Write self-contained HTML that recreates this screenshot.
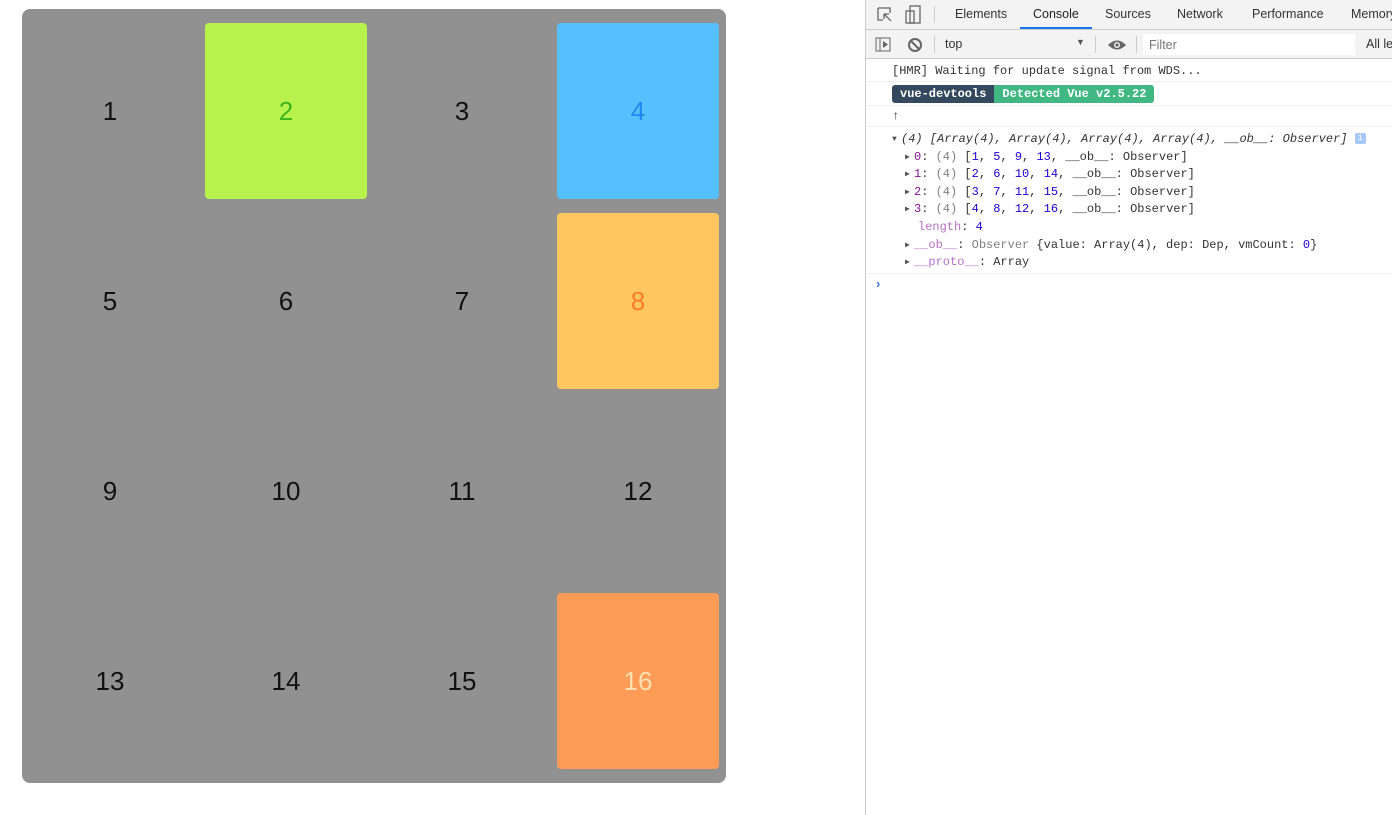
<!DOCTYPE html>
<html><head><meta charset="utf-8"><style>
*{margin:0;padding:0;box-sizing:border-box}
body{width:1392px;height:815px;background:#fff;position:relative;overflow:hidden;font-family:"Liberation Sans",sans-serif}
.grid{position:absolute;left:22px;top:9px;width:704px;height:774px;background:#919191;border-radius:8px}
.c{position:absolute;width:162px;height:176px;border-radius:4px;display:flex;align-items:center;justify-content:center;font-size:26px;color:#111}
.dt{position:absolute;left:865px;top:0;width:527px;height:815px;border-left:1px solid #ccc;background:#fff;font-size:12.5px;color:#333;overflow:hidden}
.tb{height:30px;background:#f3f3f3;border-bottom:1px solid #ccc;position:relative}
.tb span{position:absolute;top:7px;font-size:12.5px;color:#333;white-space:nowrap}
.tb2{height:29px;background:#f3f3f3;border-bottom:1px solid #ccc;position:relative}
.mono{font-family:"Liberation Mono","DejaVu Sans Mono",monospace;font-size:12px}
.line{position:absolute;left:0;width:527px}
.p{color:#881391}.n{color:#1c00cf}.g{color:#808080}
.r{height:17.6px;line-height:17.6px;white-space:pre;position:relative}
.t{display:inline-block;width:9px;font-size:8px;color:#555;vertical-align:top}
</style></head><body>
<div class="grid">
<div class="c" style="left:7px;top:14px">1</div>
<div class="c" style="left:183px;top:14px;background:#b8f24c;color:#3fb31a">2</div>
<div class="c" style="left:359px;top:14px">3</div>
<div class="c" style="left:535px;top:14px;background:#55bfff;color:#1e88f0">4</div>
<div class="c" style="left:7px;top:204px">5</div>
<div class="c" style="left:183px;top:204px">6</div>
<div class="c" style="left:359px;top:204px">7</div>
<div class="c" style="left:535px;top:204px;background:#fec65e;color:#fb7d28">8</div>
<div class="c" style="left:7px;top:394px">9</div>
<div class="c" style="left:183px;top:394px">10</div>
<div class="c" style="left:359px;top:394px">11</div>
<div class="c" style="left:535px;top:394px">12</div>
<div class="c" style="left:7px;top:584px">13</div>
<div class="c" style="left:183px;top:584px">14</div>
<div class="c" style="left:359px;top:584px">15</div>
<div class="c" style="left:535px;top:584px;background:#fe9b56;color:#ffe0b0">16</div>
</div>
<div class="dt">
<div class="tb">
<svg style="position:absolute;left:10px;top:6px" width="18" height="18"><path d="M2 2h12v5M2 2v12h5M8 8l7 7M8 8h5M8 8v5" stroke="#666" fill="none" stroke-width="1.3"/></svg>
<svg style="position:absolute;left:38px;top:5px" width="18" height="20"><rect x="2" y="6" width="8" height="12" stroke="#666" fill="none" stroke-width="1.3"/><rect x="6" y="1" width="10" height="17" stroke="#666" fill="none" stroke-width="1.3"/></svg>
<div style="position:absolute;left:68px;top:6px;width:1px;height:17px;background:#ccc"></div>
<span style="left:89px">Elements</span>
<span style="left:167px;color:#222">Console</span>
<div style="position:absolute;left:154px;top:27px;width:72px;height:2px;background:#1a73e8"></div>
<span style="left:239px">Sources</span>
<span style="left:311px">Network</span>
<span style="left:386px">Performance</span>
<span style="left:485px">Memory</span>
</div>
<div class="tb2">
<svg style="position:absolute;left:9px;top:7px" width="16" height="16"><rect x="1" y="1" width="14" height="13" stroke="#666" fill="none"/><path d="M5 1v13" stroke="#666"/><path d="M8 4l5 3.5-5 3.5z" fill="#666"/></svg>
<svg style="position:absolute;left:41px;top:7px" width="16" height="16"><circle cx="8" cy="8" r="6" stroke="#666" fill="none" stroke-width="2"/><path d="M4 4l8 8" stroke="#666" stroke-width="2"/></svg>
<div style="position:absolute;left:68px;top:6px;width:1px;height:17px;background:#ccc"></div>
<span style="position:absolute;left:79px;top:7px">top</span>
<span style="position:absolute;left:210px;top:7px;font-size:9px;color:#555">▼</span>
<div style="position:absolute;left:229px;top:6px;width:1px;height:17px;background:#ccc"></div>
<svg style="position:absolute;left:241px;top:8px" width="20" height="14"><path d="M1 7Q10 -2 19 7Q10 16 1 7z" fill="#666"/><circle cx="10" cy="7" r="3" fill="#f3f3f3"/><circle cx="10" cy="7" r="1.6" fill="#666"/></svg>
<div style="position:absolute;left:270px;top:6px;width:1px;height:17px;background:#ccc"></div>
<div style="position:absolute;left:277px;top:4px;width:212px;height:21px;background:#fff"></div>
<span style="position:absolute;left:283px;top:8px;color:#777">Filter</span>
<span style="position:absolute;left:500px;top:7px;white-space:nowrap">All levels</span>
</div>
<div class="line mono" style="top:59px;height:23px;border-bottom:1px solid #eee;padding:5px 0 0 26px">[HMR] Waiting for update signal from WDS...</div>
<div class="line" style="top:82px;height:24px;border-bottom:1px solid #eee">
<div class="mono" style="position:absolute;left:26px;top:3px;height:18px;display:flex;font-weight:bold;color:#fff;line-height:18px">
<div style="background:#35495e;padding:0 8px;border-radius:3px 0 0 3px">vue-devtools</div><div style="background:#41b883;padding:0 8px;border-radius:0 3px 3px 0">Detected Vue v2.5.22</div></div></div>
<div class="line mono" style="top:106px;height:21px;border-bottom:1px solid #eee;padding:3px 0 0 26px">↑</div>
<div class="mono" style="position:absolute;left:26px;top:131px">
<div class="r"><span class="t">▼</span><i>(4) [Array(4), Array(4), Array(4), Array(4), __ob__: Observer]</i> <span style="display:inline-block;width:11px;height:11px;background:#a8c8f8;border-radius:2px;color:#fff;font-size:9px;text-align:center;line-height:11px;vertical-align:middle">i</span></div>
<div class="r" style="padding-left:13px"><span class="t">▶</span><span class="p">0</span>: <span class="g">(4)</span> [<span class="n">1</span>, <span class="n">5</span>, <span class="n">9</span>, <span class="n">13</span>, __ob__: Observer]</div>
<div class="r" style="padding-left:13px"><span class="t">▶</span><span class="p">1</span>: <span class="g">(4)</span> [<span class="n">2</span>, <span class="n">6</span>, <span class="n">10</span>, <span class="n">14</span>, __ob__: Observer]</div>
<div class="r" style="padding-left:13px"><span class="t">▶</span><span class="p">2</span>: <span class="g">(4)</span> [<span class="n">3</span>, <span class="n">7</span>, <span class="n">11</span>, <span class="n">15</span>, __ob__: Observer]</div>
<div class="r" style="padding-left:13px"><span class="t">▶</span><span class="p">3</span>: <span class="g">(4)</span> [<span class="n">4</span>, <span class="n">8</span>, <span class="n">12</span>, <span class="n">16</span>, __ob__: Observer]</div>
<div class="r" style="padding-left:26px"><span style="color:#b871c8">length</span>: <span class="n">4</span></div>
<div class="r" style="padding-left:13px"><span class="t">▶</span><span style="color:#b871c8">__ob__</span>: <span class="g">Observer</span> {value: Array(4), dep: Dep, vmCount: <span class="n">0</span>}</div>
<div class="r" style="padding-left:13px"><span class="t">▶</span><span style="color:#b871c8">__proto__</span>: Array</div>
</div>
<div class="line" style="top:273px;border-top:1px solid #eee;height:1px"></div>
<div style="position:absolute;left:10px;top:276px;color:#367cf1;font-size:13px;font-weight:bold">›</div>
</div>
</body></html>
